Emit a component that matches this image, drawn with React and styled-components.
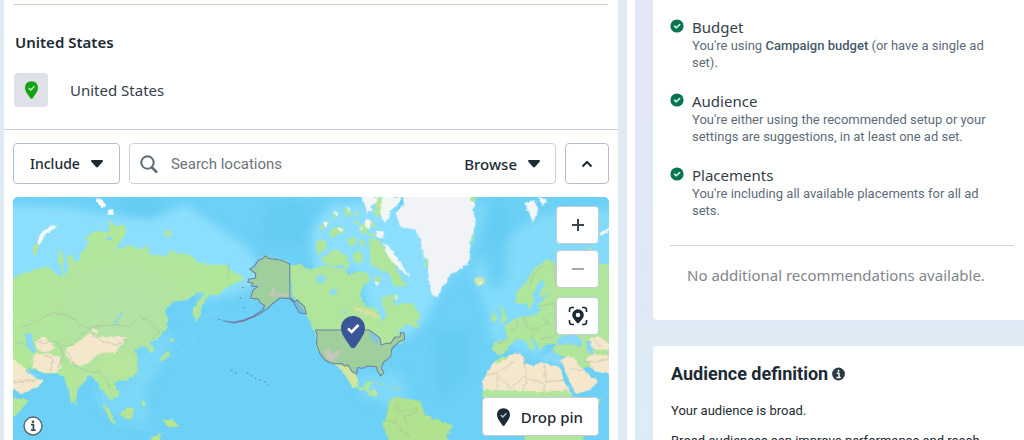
import React, { useState } from "react";
import styled, { createGlobalStyle } from "styled-components";

const CheckPin = ({ width, height, check }) => (
  <svg width={width} height={height} viewBox="0 0 24 32" aria-hidden="true">
    <path
      fill="currentColor"
      d="M12 0C5.2 0 0 5.2 0 12c0 5 2.6 8.600 5.200 12.400 1.800 2.600 3.400 5 4.600 6.800 1 1.300 3.400 1.300 4.400 0 1.200-1.800 2.800-4.200 4.600-6.800C21.400 20.600 24 17 24 12 24 5.200 18.800 0 12 0z"
    />
    <path
      d="M7 12.500l3.600 3.400L17.500 9"
      fill="none"
      stroke={check}
      strokeWidth="2.600"
    />
  </svg>
);

const Caret = () => (
  <svg width="12" height="8" viewBox="0 0 12 8" aria-hidden="true">
    <path
      fill="#1c2b33"
      d="M1.200 0h9.600c1 0 1.500 1.100.8 1.800L7 7.100c-.5.600-1.500.600-2 0L.4 1.800C-.3 1.100.2 0 1.200 0z"
    />
  </svg>
);

const CircleCheck = () => (
  <svg width="14" height="14" viewBox="0 0 14 14" aria-hidden="true">
    <circle cx="7" cy="7" r="6.600" fill="#0a7352" />
    <path
      d="M4.500 7.200l1.800 1.600L9.600 5.600"
      fill="none"
      stroke="#d5f3e4"
      strokeWidth="1.600"
      strokeLinecap="round"
      strokeLinejoin="round"
    />
  </svg>
);

const WorldMap = () => (
  <MapCanvas
    viewBox="13 197 595 248"
    preserveAspectRatio="xMidYMid slice"
    role="img"
    aria-label="Map"
  >
    <defs>
      <filter id="coast" x="-5%" y="-5%" width="110%" height="110%">
        <feTurbulence type="fractalNoise" baseFrequency="0.22" numOctaves="2" seed="4" />
        <feDisplacementMap in="SourceGraphic" scale="4" xChannelSelector="R" yChannelSelector="G" />
      </filter>
      <filter id="soft" x="-20%" y="-20%" width="140%" height="140%">
        <feGaussianBlur stdDeviation="5" />
      </filter>
      <radialGradient id="taiga">
        <stop offset="0" stopColor="#b3e2a6" />
        <stop offset="1" stopColor="#b0e898" />
      </radialGradient>
    </defs>

    <rect x="0" y="180" width="640" height="280" fill="#6dd0f6" />

    {/* shallow water */}
    <g fill="#8cdffc" filter="url(#soft)">
      <path d="M0 205L60 207 110 215 150 220 185 205 215 225 250 250 262 275 250 290 205 300 195 290 160 270 100 275 0 290z" />
      <path d="M310 230L330 205 380 200 440 240 440 290 425 320 405 340 370 320 360 270 315 275z" />
      <path d="M470 270L500 240 540 215 620 208 620 270 560 290 540 360 490 340 485 310z" opacity=".7" />
      <path d="M140 340L175 330 165 360 145 390 150 425 120 420 100 405 95 390 130 380z" opacity=".5" />
      <path d="M438 235L470 200 490 205 470 260 445 290z" opacity=".5" />
      <path d="M355 375L400 372 410 405 385 405 360 395z" opacity=".6" />
    </g>
    <g fill="#62caf2" filter="url(#soft)" opacity=".7">
      <path d="M265 205L300 200 312 215 300 245 262 245z" />
      <path d="M120 198L165 197 155 212 128 212z" />
      <path d="M490 200L510 210 505 280 492 290 482 260z" />
      <path d="M435 330L465 330 470 370 440 400z" />
    </g>
    <g fill="none" stroke="#8bddfa" strokeWidth="2" opacity=".3">
      <path d="M202 325L190 345 172 357 155 362M200 320C210 312 216 312 222 316" />
      <path d="M95 390L102 415 118 425 140 428 170 435M135 385L140 400 150 415" />
    </g>

    <g filter="url(#coast)">
      {/* Asia */}
      <g transform="translate(0 190) scale(.33333)">
        <path
          fill="url(#taiga)"
          d="M20 275L70 250 95 245 120 235 145 230 160 245 185 262 190 245 178 220 172 205 180 180 190 195 192 235 200 258 205 235 200 205 215 190 222 215 240 210 240 190 262 170 258 140 285 125 325 125 330 92 345 108 370 105 378 125 365 150 345 180 395 165 410 180 440 165 450 195 500 200 510 180 530 190 570 195 590 215 630 225 680 225 690 240 725 258 730 270 700 280 670 300 650 315 630 315 620 325 605 350 600 375 590 395 580 380 580 350 600 325 615 305 590 310 560 330 520 335 490 365 505 385 500 410 475 445 450 455 463 480 450 490 440 470 425 470 410 480 400 475 412 500 412 545 385 570 345 575 348 595 358 615 335 630 315 610 300 590 285 570 270 555 255 575 232 595 228 630 215 640 200 590 192 560 175 550 130 550 85 530 100 560 130 570 115 590 65 612 20 590z"
        />
        <path fill="#b0e898" d="M20 622L88 628 60 665 20 695z" />
        <path fill="#b9e59b" d="M300 490L400 480 412 545 385 570 300 560 200 545 200 580 230 600 270 550z" opacity=".6" />
        <g fill="#f4e7cb">
          <path d="M20 495L60 520 80 545 100 560 130 570 115 590 65 612 20 585z" />
          <path d="M105 452L130 440 165 470 150 485 110 480z" />
          <path d="M100 495L140 488 180 500 185 530 170 548 130 548 95 530z" />
          <path d="M200 475L230 460 270 430 300 442 380 440 365 465 340 488 300 490 270 515 240 530 210 515 195 490z" />
          <path d="M275 415L295 418 290 432 275 425z" />
        </g>
        <g fill="#85d8f8">
          <path d="M75 430L100 432 96 450 108 485 92 490 80 462z" />
          <path d="M362 368L368 372 348 402 340 400z" />
          <path d="M78 535L95 548 118 556 105 562 85 552z" />
          <path d="M318 146L335 140 338 150 322 154z" />
        </g>
        <g fill="#f7f9f8">
          <path d="M110 160L125 125 168 103 172 110 135 135 118 165z" />
          <path d="M285 25L305 28 318 52 300 52z" />
          <path d="M320 60L338 58 342 74 324 74z" />
        </g>
        <g fill="#b8e590">
          <path d="M105 160L118 168 108 182 112 200 100 190z" />
          <path d="M490 125L512 123 514 138 494 136z" />
          <path d="M385 480L402 478 405 490 390 492z" opacity=".5" />
          <path d="M508 440L526 450 512 460z" />
          <path d="M503 478L508 495 488 510 476 512 492 494z" />
          <path d="M412 548L418 560 411 566z" />
          <path d="M305 640L325 655 350 705 335 698z" />
          <path d="M362 668L385 650 402 658 390 690 368 685z" />
          <path d="M480 685L515 688 540 710 505 710z" />
          <path d="M455 740L480 732 485 760 445 760z" />
          <path d="M422 625L438 645 428 648z" />
          <path d="M222 632L232 642 226 650z" />
        </g>
        <path
          fill="none"
          stroke="#a9b2a6"
          strokeWidth="2"
          opacity=".8"
          d="M70 410L110 395 140 375 170 368 210 380 235 405 270 415 250 430 215 465 180 470 165 455 130 460 105 450M270 410L340 405 385 410 415 380 445 390 480 425 455 445M270 430L310 455 350 465 380 445M200 485L230 530 270 545 300 545M300 545L320 570 330 600M130 490L160 510 150 545M180 470L190 500 170 540M40 575L110 570M40 455L70 460 90 470"
        />
      </g>

      {/* Americas */}
      <g transform="translate(200 190) scale(.33333)">
        <path
          fill="#b0e69b"
          d="M268 222L300 225 330 240 380 225 410 235 430 235 445 255 480 240 505 255 508 275 485 290 480 320 495 345 530 360 545 395 555 380 550 350 540 325 565 318 590 350 600 340 635 340 660 380 640 400 615 405 590 425 612 432 612 450 575 470 570 500 545 520 550 552 538 558 528 530 500 528 470 535 466 550 475 590 490 590 495 575 512 575 503 600 530 608 530 622 515 618 490 600 450 588 430 545 405 525 375 510 350 480 347 440 330 400 318 375 300 345 275 320z"
        />
        <path
          fill="#b0e69b"
          d="M268 222L245 210 225 208 195 197 175 212 160 235 148 240 165 252 165 265 145 270 150 285 172 290 158 300 150 325 175 328 180 342 192 345 195 358 215 340 245 322 270 325z"
        />
        <path fill="#b0e28f" d="M565 635L580 620 660 632 670 668 700 685 755 705 740 735 745 765 570 765 545 700 560 680z" />
        <path fill="#dfe6a0" d="M400 520L440 530 466 550 475 590 455 588 430 550z" opacity=".7" />
        <g fill="#b0e69b">
          <path d="M345 152L375 150 378 175 352 195z" />
          <path d="M360 205L385 192 395 178 418 185 440 198 438 225 400 228 368 218z" />
          <path d="M356 115L372 95 388 92 380 112 362 120z" />
          <path d="M385 128L400 115 428 112 430 128 408 138 392 140z" />
          <path d="M440 150L462 140 468 165 450 170z" />
          <path d="M455 195L475 180 490 200 478 222 462 215z" />
          <path d="M478 105L500 95 502 128 482 130z" />
          <path d="M505 150L530 145 545 165 560 190 580 220 600 260 615 290 590 290 565 262 535 235 512 225 508 190z" />
          <path d="M520 260L540 262 530 290z" />
          <path d="M528 20L546 20 544 60 530 85 520 70z" />
          <path d="M570 310L592 318 590 335 572 325z" />
          <path d="M430 52L446 60 455 75 445 82 432 68z" />
          <path d="M465 68L474 64 474 76 466 78z" />
          <path d="M395 72L410 66 412 80 400 84z" />
          <path d="M455 88L475 95 468 106z" />
          <path d="M508 125L522 130 518 142 506 140z" />
          <path d="M478 150L494 155 488 175 478 168z" />
          <path d="M430 220L446 214 444 236 432 236z" />
          <path d="M510 100L520 92 524 110 512 116z" />
          <path d="M625 402L645 398 660 410 635 412z" />
        </g>
        <g fill="#f4f6f6">
          <path d="M480 20L530 20 528 40 512 50 516 64 498 68 496 48z" />
          <path d="M545 20L604 20 590 48 570 60 566 84 550 100 538 70z" />
          <path d="M525 122L550 125 548 142 526 140z" />
          <path d="M548 158L572 180 592 210 630 262 610 250 580 222 560 195z" />
          <path d="M495 85L512 95 505 120 492 105z" />
          <path d="M366 98L382 95 380 110 370 112z" />
          <path d="M402 64L414 72 404 78z" />
          <path d="M410 118L424 116 424 126z" />
          <path d="M436 48L448 58 442 64z" />
          <path d="M476 112L486 110 484 122z" />
          <path d="M522 275L538 280 528 290z" />
          <path d="M580 318L592 320 590 330z" />
        </g>
        <g fill="#eadfa6" opacity=".7">
          <path d="M460 350L500 360 535 375 540 390 500 375 465 362z" />
          <path d="M520 590L530 610 518 618z" />
        </g>
        <g fill="#8bdcf5">
          <path d="M345 258L375 255 372 278 350 278z" />
          <path d="M385 305L410 295 412 305 390 318z" />
          <path d="M508 425L530 435 540 465 528 460 512 445z" />
          <path d="M430 355L436 370 428 372z" />
          <path d="M555 240L570 262 562 268 550 252z" />
        </g>
        <g fill="#e0dcbc">
          <path d="M370 480L390 475 395 490 418 480 415 500 390 515 372 500z" />
          <path d="M205 312L218 294 226 298 222 310 240 306 248 310 268 308 270 320 245 318 210 320z" />
        </g>
        <g fill="#a4d9a8">
          <path d="M500 570L545 580 560 588 530 582z" opacity=".7" />
          <path d="M570 590L600 592 590 600 570 598z" opacity=".7" />
        </g>
        <path
          fill="none"
          stroke="#a9b2a6"
          strokeWidth="2"
          opacity=".8"
          d="M585 640L595 665 620 660 650 655M560 690L590 700 600 720 630 740M620 700L610 680 650 665M84 222L84 265"
        />
      </g>

      {/* Greenland, Europe and Africa */}
      <g transform="translate(400 190) scale(.33333)">
        <path
          fill="#f1f3f6"
          d="M5 10L225 10 218 60 224 100 210 150 205 180 208 215 190 230 150 252 128 288 108 322 92 310 85 270 80 220 65 190 60 150 40 118 0 112 -15 70 10 45z"
        />
        <path fill="#b0e69b" d="M210 15L228 18 222 38 210 32zM214 130L222 150 212 165zM76 200L84 215 82 240 76 225z" />
        <path fill="#cfe8a8" d="M218 270L235 262 252 268 248 284 230 288z" />
        <path fill="#fbfaf2" d="M234 276L246 274 242 284z" />
        <g fill="#f4f7f8">
          <path d="M370 40L400 30 412 60 396 98 385 70z" />
          <path d="M410 20L440 30 425 48z" />
          <path d="M595 130L630 110 630 118 600 138z" />
        </g>
        <path
          fill="#b0e69b"
          d="M640 222L600 225 560 215 520 235 465 225 455 212 430 212 400 235 375 275 345 310 345 335 360 345 375 335 382 358 395 350 400 310 410 280 425 268 430 290 415 310 420 322 450 305 430 325 410 345 420 362 400 375 370 378 345 385 310 408 318 430 322 442 315 450 280 455 275 480 290 492 305 495 325 472 340 452 360 445 395 480 405 470 385 445 400 450 420 482 430 465 470 460 450 478 460 492 480 495 540 530 640 540z"
        />
        <g fill="#b0e69b">
          <path d="M295 345L310 358 318 390 298 402 305 375z" />
          <path d="M275 368L290 372 285 395 272 392z" />
          <path d="M558 175L575 172 572 182z" />
          <path d="M5 345L35 340 60 380 40 400 5 400z" />
        </g>
        <path fill="#85d8f8" d="M470 440L520 432 545 455 540 468 500 462 472 466zM555 455L575 450 575 500 560 480zM452 480L420 500 400 500 440 515 480 525 485 500z" />
        <path
          fill="#f4e7cb"
          d="M255 550L285 512 310 500 345 490 370 500 370 518 400 528 420 515 470 528 480 535 490 575 515 615 515 780 440 780 430 730 300 650 250 620 245 580z"
        />
        <path fill="#b0e69b" d="M245 598L410 606 500 600 525 625 600 625 570 700 530 780 380 780 360 700 280 660 248 625zM280 512L310 500 330 495 290 522z" />
        <path fill="#f4e7cb" d="M480 510L500 495 520 505 545 535 562 555 592 572 570 598 525 612 508 580z" />
        <path fill="#f4e7cb" d="M555 508L580 490 640 500 640 550 585 545zM565 445L590 438 640 470 600 482 572 475z" />
        <path
          fill="none"
          stroke="#a9b2a6"
          strokeWidth="2"
          opacity=".8"
          d="M460 220L465 290M430 225L400 250 385 290M285 550L340 515M370 500L375 555 330 595 285 550 250 552M365 560L430 580 430 605M430 520L435 575 490 570M380 560L365 605M290 560L290 590M510 535L540 540M345 385L350 410 330 425M370 378L375 410 400 420 440 400 425 380M400 420L390 445M440 400L470 410 460 440 420 445M410 350L460 340 465 400M320 450L290 460M550 515L590 515 625 505M580 450L600 470"
        />
      </g>
    </g>

    {/* United States, selected region */}
    <g
      transform="translate(200 190) scale(.33333)"
      fill="#6a86a0"
      fillOpacity=".24"
      stroke="#6d7fa8"
      strokeWidth="3"
      strokeLinejoin="round"
    >
      <path d="M345 420L505 420 520 430 538 444 542 465 556 460 570 460 582 442 598 440 600 428 610 428 612 448 594 456 574 476 570 500 548 518 542 534 550 548 540 558 532 546 527 530 500 528 485 535 472 532 468 552 455 545 442 524 432 528 424 520 400 522 375 512 358 490 348 462 350 436z" />
      <path d="M268 222L245 212 225 208 205 206 195 197 188 206 175 210 160 230 148 238 165 250 166 264 145 268 142 276 158 280 152 288 172 290 158 300 150 325 175 328 178 338 192 346 188 358 160 378 130 390 100 397 75 394 100 399 130 393 165 379 200 358 215 342 240 324 268 326 278 336 296 368 318 372 312 350 290 330 284 336 268 322z" />
      <path
        fill="none"
        strokeDasharray="5 9"
        d="M55 388L75 393M92 540L112 552M140 548L165 565 185 572M192 574L205 586M125 292L140 294M118 322L124 326M130 352L138 356"
      />
    </g>
  </MapCanvas>
);

const checks = [
  {
    title: "Budget",
    text: (
      <>
        You're using <b>Campaign budget</b> (or have a single ad set).
      </>
    ),
  },
  {
    title: "Audience",
    text: "You're either using the recommended setup or your settings are suggestions, in at least one ad set.",
  },
  {
    title: "Placements",
    text: "You're including all available placements for all ad sets.",
  },
];

const App = () => {
  const [query, setQuery] = useState("");

  return (
    <>
      <GlobalStyle />
      <Page>
        <Main>
          <Selected>
            <h2>United States</h2>
            <div className="location">
              <PinTile>
                <CheckPin width={13} height={18} check="#c9f2c4" />
              </PinTile>
              <span>United States</span>
            </div>
          </Selected>
          <Toolbar>
            <OutlineButton $pad={16}>
              Include
              <Caret />
            </OutlineButton>
            <SearchBox>
              <svg width="18" height="18" viewBox="0 0 18 18" aria-hidden="true">
                <circle cx="7.500" cy="7.500" r="6.200" fill="none" stroke="#5d6c76" strokeWidth="2" />
                <path d="M12 12.500l4.300 4.300" stroke="#5d6c76" strokeWidth="2.600" strokeLinecap="round" />
              </svg>
              <input
                type="text"
                aria-label="Search locations"
                placeholder="Search locations"
                value={query}
                onChange={(e) => setQuery(e.target.value)}
              />
              <button>
                Browse
                <Caret />
              </button>
            </SearchBox>
            <OutlineButton $pad={15} aria-label="Collapse map">
              <svg width="12" height="8" viewBox="0 0 12 8" aria-hidden="true">
                <path d="M1.500 6.500L6 2l4.500 4.500" fill="none" stroke="#1c2b33" strokeWidth="2" />
              </svg>
            </OutlineButton>
          </Toolbar>
          <MapBox>
            <WorldMap />
            <Marker>
              <CheckPin width={24} height={32} check="#fff" />
            </Marker>
            <Controls>
              <MapButton aria-label="Zoom in">
                <svg width="14" height="14" viewBox="0 0 14 14" aria-hidden="true">
                  <path d="M7 1v12M1 7h12" stroke="#3a474e" strokeWidth="2" />
                </svg>
              </MapButton>
              <MapButton aria-label="Zoom out" disabled>
                <svg width="14" height="14" viewBox="0 0 14 14" aria-hidden="true">
                  <path d="M1 7h12" stroke="#a3a9ae" strokeWidth="2" />
                </svg>
              </MapButton>
              <MapButton $last aria-label="Locate">
                <svg width="20" height="20" viewBox="0 0 20 20" aria-hidden="true">
                  <path
                    fill="none"
                    stroke="#1c2b33"
                    strokeWidth="1.600"
                    d="M1.500 6V4c0-1.500 1-2.500 2.500-2.500h2M14 1.500h2c1.500 0 2.500 1 2.500 2.500v2M18.500 14v2c0 1.500-1 2.500-2.500 2.500h-2M6 18.500H4c-1.500 0-2.500-1-2.500-2.500v-2"
                  />
                  <path
                    fill="#1c2b33"
                    fillRule="evenodd"
                    d="M10 3.200a5.800 5.800 0 0 0-5.800 5.800c0 3 2.900 5.300 4.700 7.800.5.700 1.700.7 2.200 0 1.800-2.500 4.700-4.800 4.700-7.800A5.800 5.800 0 0 0 10 3.200zm0 3.500a2.300 2.300 0 1 1 0 4.600 2.300 2.300 0 0 1 0-4.600z"
                  />
                </svg>
              </MapButton>
            </Controls>
            <InfoButton aria-label="Map information">
              <svg width="20" height="20" viewBox="0 0 20 20" aria-hidden="true">
                <circle cx="10" cy="10" r="9" fill="#fff" stroke="#56666f" strokeWidth="1.400" />
                <path d="M8 8.700h2.400v5.300M8 14.200h4.600" fill="none" stroke="#3a4a53" strokeWidth="1.800" />
                <circle cx="10" cy="5.800" r="1.300" fill="#3a4a53" />
              </svg>
            </InfoButton>
            <DropPin>
              <CheckPin width={13} height={18} check="#b9c3c9" />
              Drop pin
            </DropPin>
          </MapBox>
        </Main>
        <Track />
        <Side>
          <Card>
            <CheckList>
              {checks.map((check) => (
                <li key={check.title}>
                  <CircleCheck />
                  <div>
                    <h3>{check.title}</h3>
                    <p>{check.text}</p>
                  </div>
                </li>
              ))}
            </CheckList>
            <Empty>No additional recommendations available.</Empty>
          </Card>
          <Card>
            <Definition>
              <h2>
                Audience definition
                <svg width="13" height="14" viewBox="0 0 13 14" aria-hidden="true">
                  <circle cx="6.500" cy="7" r="6.400" fill="#2b3a42" />
                  <path d="M4.800 6.200h2.200v4.300M4.500 10.500h4.200" fill="none" stroke="#fff" strokeWidth="1.400" />
                  <circle cx="6.500" cy="3.700" r="1" fill="#fff" />
                </svg>
              </h2>
              <p>Your audience is broad.</p>
              <p>Broad audiences can improve performance and reach more people likely to respond.</p>
            </Definition>
          </Card>
        </Side>
      </Page>
    </>
  );
};

const GlobalStyle = createGlobalStyle`
  * {
    box-sizing: border-box;
  }

  html {
    scrollbar-width: none;
  }

  body {
    margin: 0;
    background: #dfeaf5;
    color: #1c2b33;
    font-family: "Noto Sans", "Liberation Sans", sans-serif;
  }

  h2,
  h3,
  p,
  ul {
    margin: 0;
    padding: 0;
  }

  button,
  input {
    font: inherit;
    color: inherit;
  }

  button {
    cursor: pointer;
  }
`;

const Page = styled.div`
  display: grid;
  grid-template-columns: minmax(0, 1fr) 8px 389px;
  height: 100vh;
  overflow: hidden;
`;

const Main = styled.main`
  margin: 0 9px 0 4px;
  background: white;
`;

const Selected = styled.section`
  padding: 4px 10px 22px;
  border-bottom: 1px solid #ccd0dc;

  h2 {
    border-top: 1px solid #ccd0dc;
    padding-top: 27px;
    padding-left: 1px;
    font-size: 15px;
    line-height: 20px;
    font-weight: 600;
  }

  .location {
    display: flex;
    align-items: center;
    gap: 22px;
    margin-top: 21px;
    color: #344149;
    font-size: 15px;
    line-height: 20px;
  }
`;

const PinTile = styled.div`
  display: flex;
  align-items: center;
  justify-content: center;
  width: 34px;
  height: 34px;
  border-radius: 4px;
  background: #dee1e7;
  color: #14a314;
`;

const Toolbar = styled.div`
  display: flex;
  gap: 9px;
  padding: 13px 9px;
`;

const OutlineButton = styled.button`
  display: flex;
  align-items: center;
  gap: 11px;
  height: 41px;
  padding: 0 ${(props) => props.$pad}px;
  background: white;
  border: 1px solid #b5bfc9;
  border-radius: 4px;
  font-size: 14px;
  font-weight: 500;
`;

const SearchBox = styled.div`
  display: flex;
  flex: 1;
  align-items: center;
  min-width: 0;
  padding: 0 15px 0 10px;
  border: 1px solid #ccd0dc;
  border-radius: 4px;

  input {
    flex: 1;
    min-width: 0;
    padding: 0 13px;
    border: none;
    outline: none;
    font-family: Roboto, sans-serif;
    font-size: 15px;
  }

  input::placeholder {
    color: #6b747b;
    opacity: 1;
  }

  button {
    display: flex;
    align-items: center;
    gap: 11px;
    padding: 0;
    border: none;
    background: none;
    font-size: 15px;
    line-height: 20px;
    font-weight: 500;
  }
`;

const MapBox = styled.div`
  position: relative;
  height: 248px;
  margin: 0 9px;
  border-radius: 5px;
  overflow: hidden;
`;

const MapCanvas = styled.svg`
  display: block;
  width: 100%;
  height: 100%;
`;

const Marker = styled.div`
  position: absolute;
  left: 57%;
  top: 48%;
  height: 32px;
  transform: translateX(-50%);
  color: #3b5698;
`;

const Controls = styled.div`
  position: absolute;
  top: 9px;
  right: 10px;
  display: flex;
  flex-direction: column;
  gap: 6px;
`;

const MapButton = styled.button`
  display: flex;
  align-items: center;
  justify-content: center;
  width: 43px;
  height: 38px;
  margin-top: ${(props) => (props.$last ? 3 : 0)}px;
  padding: 0;
  background: white;
  border: 1px solid #c3cdd6;
  border-radius: 4px;
`;

const InfoButton = styled.button`
  position: absolute;
  left: 10px;
  bottom: 9px;
  height: 20px;
  padding: 0;
  border: none;
  background: none;
`;

const DropPin = styled.button`
  position: absolute;
  right: 10px;
  bottom: 9px;
  display: flex;
  align-items: center;
  gap: 11px;
  height: 39px;
  padding: 0 15px 0 14px;
  background: white;
  border: 1px solid #c3cdd6;
  border-radius: 4px;
  font-size: 15px;
  font-weight: 500;
`;

const Track = styled.div`
  background: white;
`;

const Side = styled.aside`
  display: flex;
  flex-direction: column;
  gap: 26px;
  padding-left: 18px;
  background: linear-gradient(#e4e6f5, #dfe7f6 55%, #deebf4 75%, #dbedf5);
`;

const Card = styled.section`
  background: white;

  &:first-child {
    border-radius: 0 0 0 4px;
  }

  &:last-child {
    flex: 1 0 auto;
    border-radius: 4px 0 0 0;
  }
`;

const CheckList = styled.ul`
  display: flex;
  flex-direction: column;
  gap: 20px;
  margin: 0 10px 0 17px;
  padding: 17px 0 26px;
  border-bottom: 1px solid #ccd3da;
  list-style: none;

  li {
    display: flex;
    gap: 8px;
  }

  svg {
    flex: none;
    margin-top: 2px;
  }

  h3 {
    color: #344149;
    font-size: 15px;
    line-height: 20px;
    font-weight: 400;
  }

  p {
    padding-right: 10px;
    color: #5d6c7b;
    font-family: Roboto, sans-serif;
    font-size: 13px;
    line-height: 17px;
  }

  b {
    font-weight: 500;
    color: #465a69;
  }
`;

const Empty = styled.p`
  padding: 19px 34px 35px;
  color: #80868b;
  font-size: 15px;
  line-height: 20px;
`;

const Definition = styled.div`
  padding: 16px 18px;

  h2 {
    display: flex;
    align-items: center;
    gap: 4px;
    font-family: Roboto, sans-serif;
    font-size: 18px;
    line-height: 24px;
    font-weight: 700;
  }

  p {
    margin-top: 16px;
    font-family: Roboto, sans-serif;
    font-size: 13px;
    line-height: 18px;
  }

  p + p {
    margin-top: 12px;
  }
`;

export default App;
